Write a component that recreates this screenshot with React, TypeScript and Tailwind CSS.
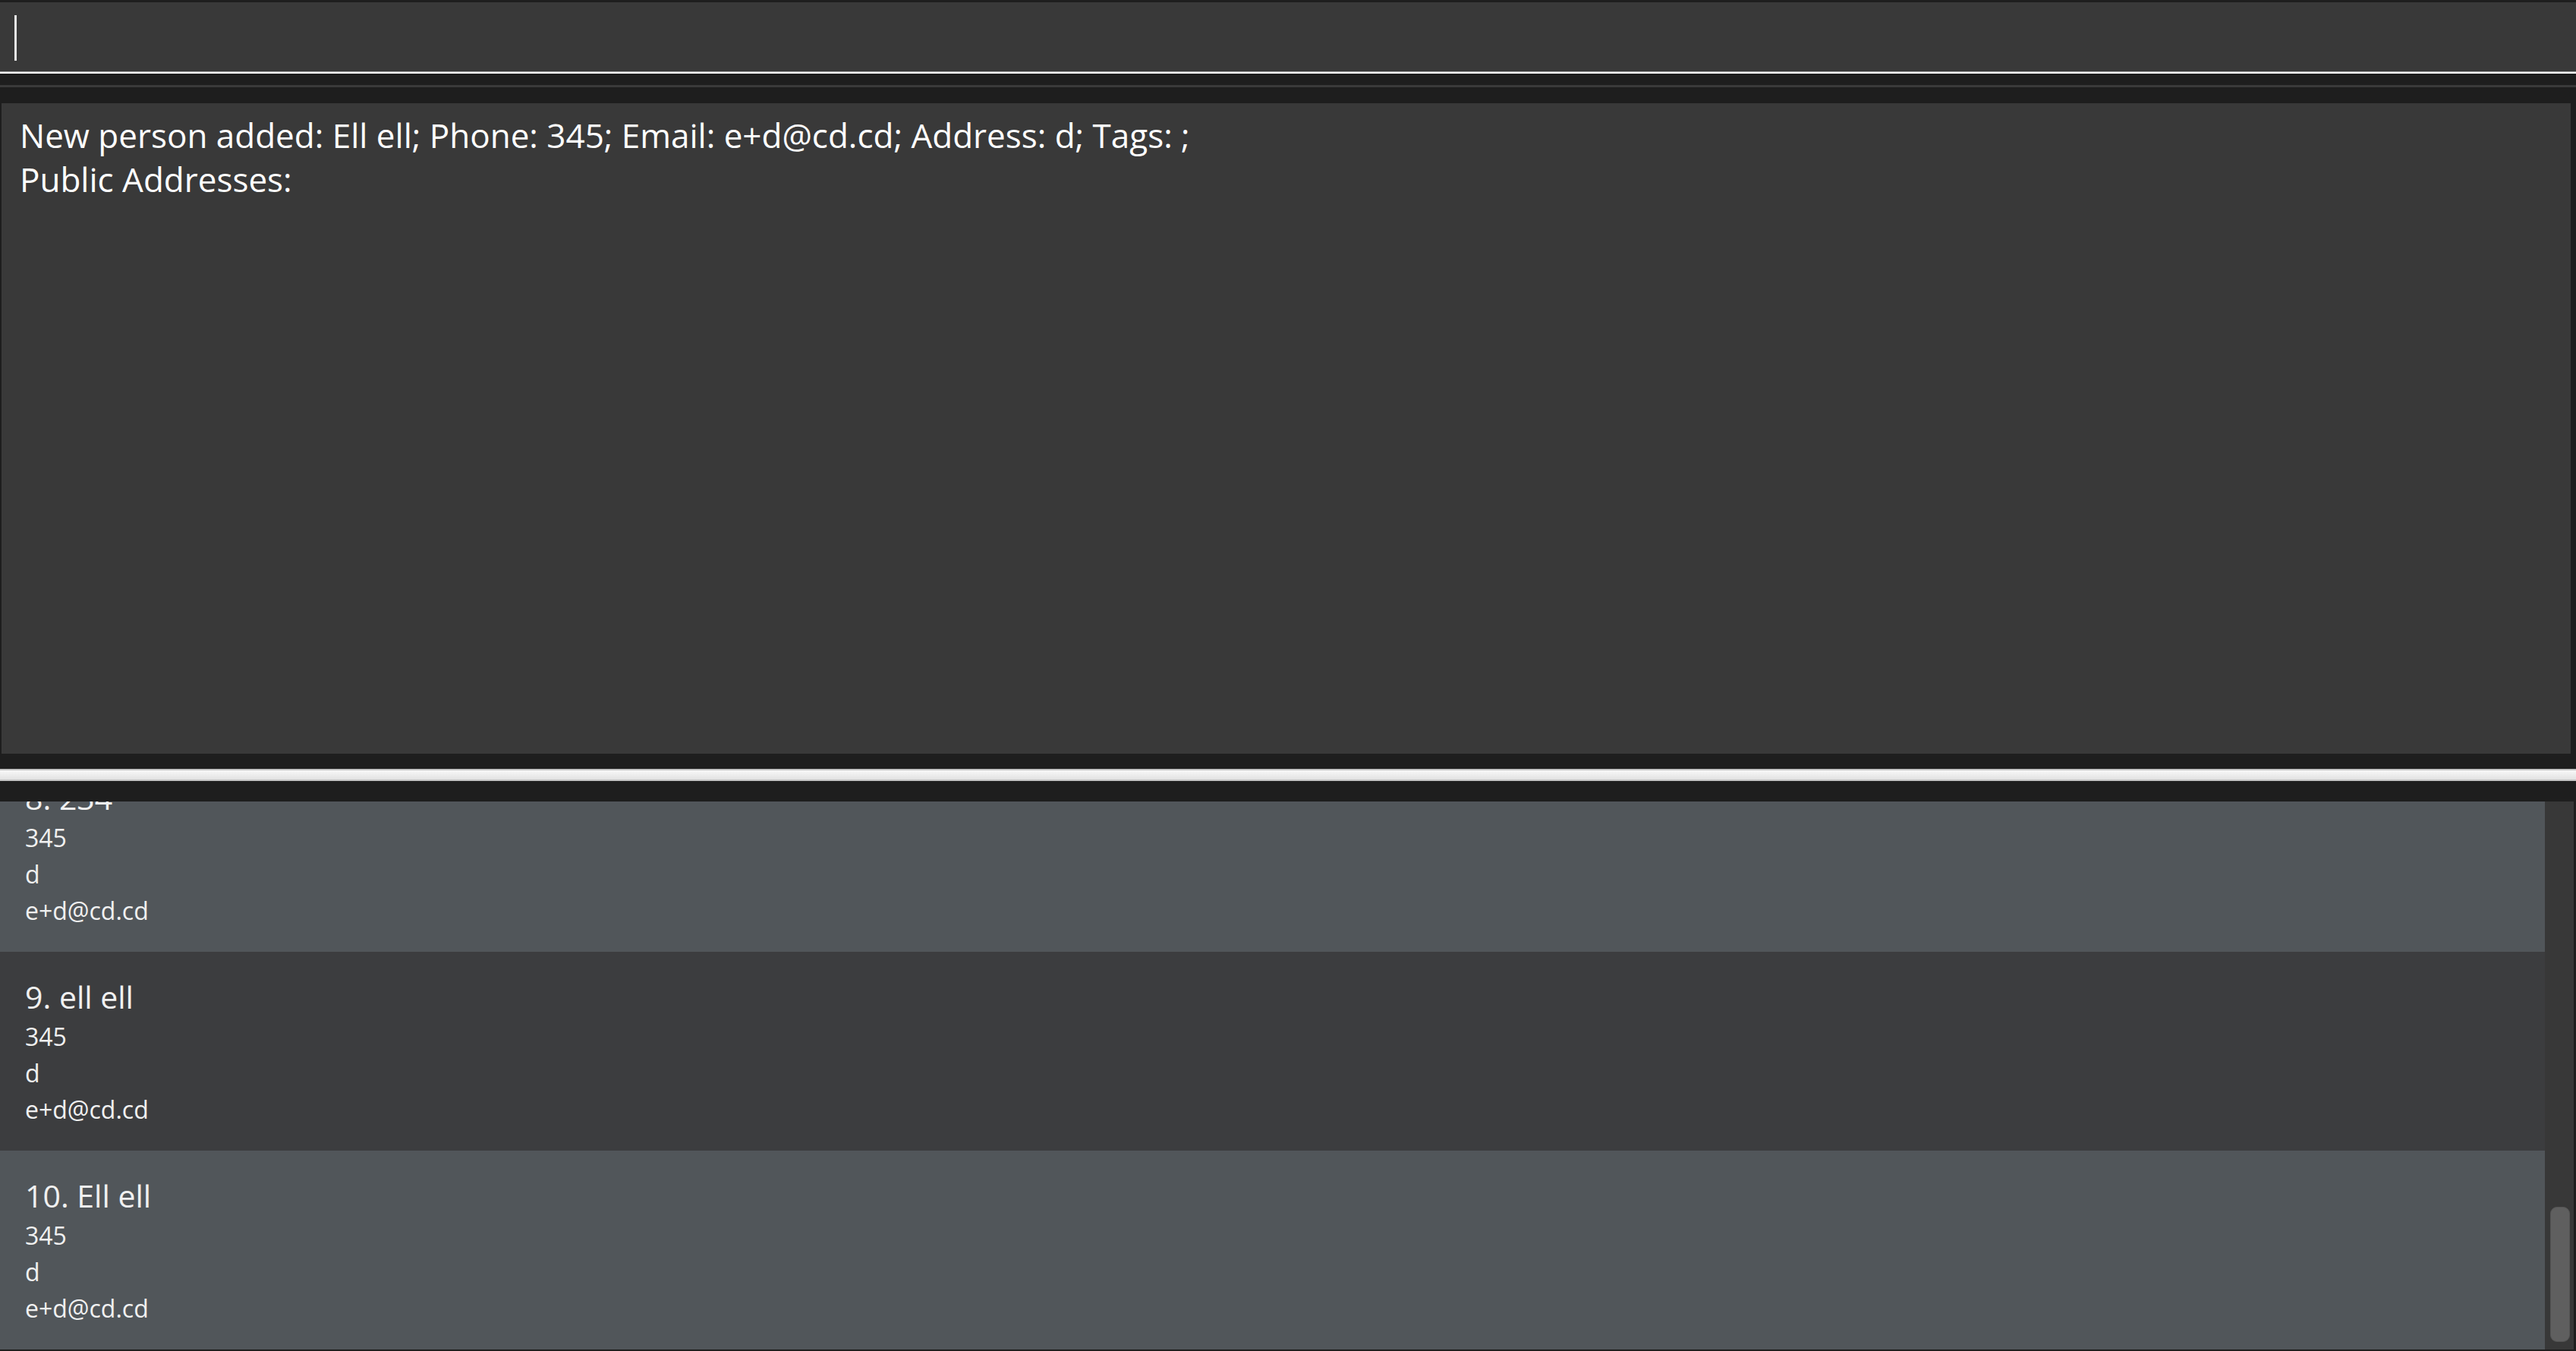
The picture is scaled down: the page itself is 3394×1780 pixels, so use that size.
import React from "react";

type Person = { idx: number; name: string; phone: string; address: string; email: string; light: boolean };

const people: Person[] = [
  { idx: 8, name: "234", phone: "345", address: "d", email: "e+d@cd.cd", light: true },
  { idx: 9, name: "ell ell", phone: "345", address: "d", email: "e+d@cd.cd", light: false },
  { idx: 10, name: "Ell ell", phone: "345", address: "d", email: "e+d@cd.cd", light: true },
];

function Card({ p }: { p: Person }) {
  return (
    <div
      className={
        "shrink-0 h-[262px] pl-[33px] pt-[31px] flex flex-col text-[#f0f0f0] " +
        (p.light ? "bg-[#51565a]" : "bg-[#3c3d3f]")
      }
    >
      <div className="text-[41px] leading-[57px] whitespace-nowrap">
        {p.idx}. {p.name}
      </div>
      <div className="text-[32px] leading-[48px]">{p.phone}</div>
      <div className="text-[32px] leading-[48px]">{p.address}</div>
      <div className="text-[32px] leading-[48px]">{p.email}</div>
    </div>
  );
}

export default function App() {
  return (
    <div className="w-[3394px] h-[1780px] bg-[#1e1e1e] flex flex-col overflow-hidden font-['Open_Sans',sans-serif]">
      <div className="h-[3px] shrink-0" />
      {/* command box */}
      <div className="h-[91px] shrink-0 bg-[#393939] pl-[19px] pt-[17px]">
        <div className="w-[3px] h-[60px] bg-[#e6e6e6]" />
      </div>
      <div className="h-[1px] shrink-0 bg-[#a8a8a8]" />
      <div className="h-[2px] shrink-0 bg-[#ffffff]" />
      <div className="h-[15px] shrink-0" />
      <div className="h-[3px] shrink-0 bg-[#3a3a3a]" />
      <div className="h-[21px] shrink-0" />
      {/* result display */}
      <div className="ml-[2px] w-[3385px] h-[857px] shrink-0 bg-[#393939] pl-[24px] pt-[13px] text-white text-[44px] leading-[58px]">
        <div className="whitespace-nowrap">New person added: Ell ell; Phone: 345; Email: e+d@cd.cd; Address: d; Tags: ;</div>
        <div className="whitespace-nowrap">Public Addresses:</div>
      </div>
      <div className="h-[20px] shrink-0" />
      {/* splitter */}
      <div className="h-[16px] shrink-0 flex flex-col">
        <div className="h-[2px] bg-[#c4c4c4]" />
        <div className="h-[12px] bg-gradient-to-b from-[#f8f8f8] to-[#e2e2e2]" />
        <div className="h-[2px] bg-[#c4c4c4]" />
      </div>
      <div className="h-[27px] shrink-0" />
      {/* list */}
      <div className="h-[722px] shrink-0 flex">
        <div className="w-[3353px] h-full overflow-hidden flex flex-col justify-end">
          {people.map((p) => (
            <Card key={p.idx} p={p} />
          ))}
        </div>
        <div className="w-[38px] h-full bg-[#383838] relative">
          <div className="absolute left-[7px] top-[534px] w-[26px] h-[178px] rounded-[9px] bg-[#5f5f5f] border border-[#555555]" />
        </div>
      </div>
    </div>
  );
}
